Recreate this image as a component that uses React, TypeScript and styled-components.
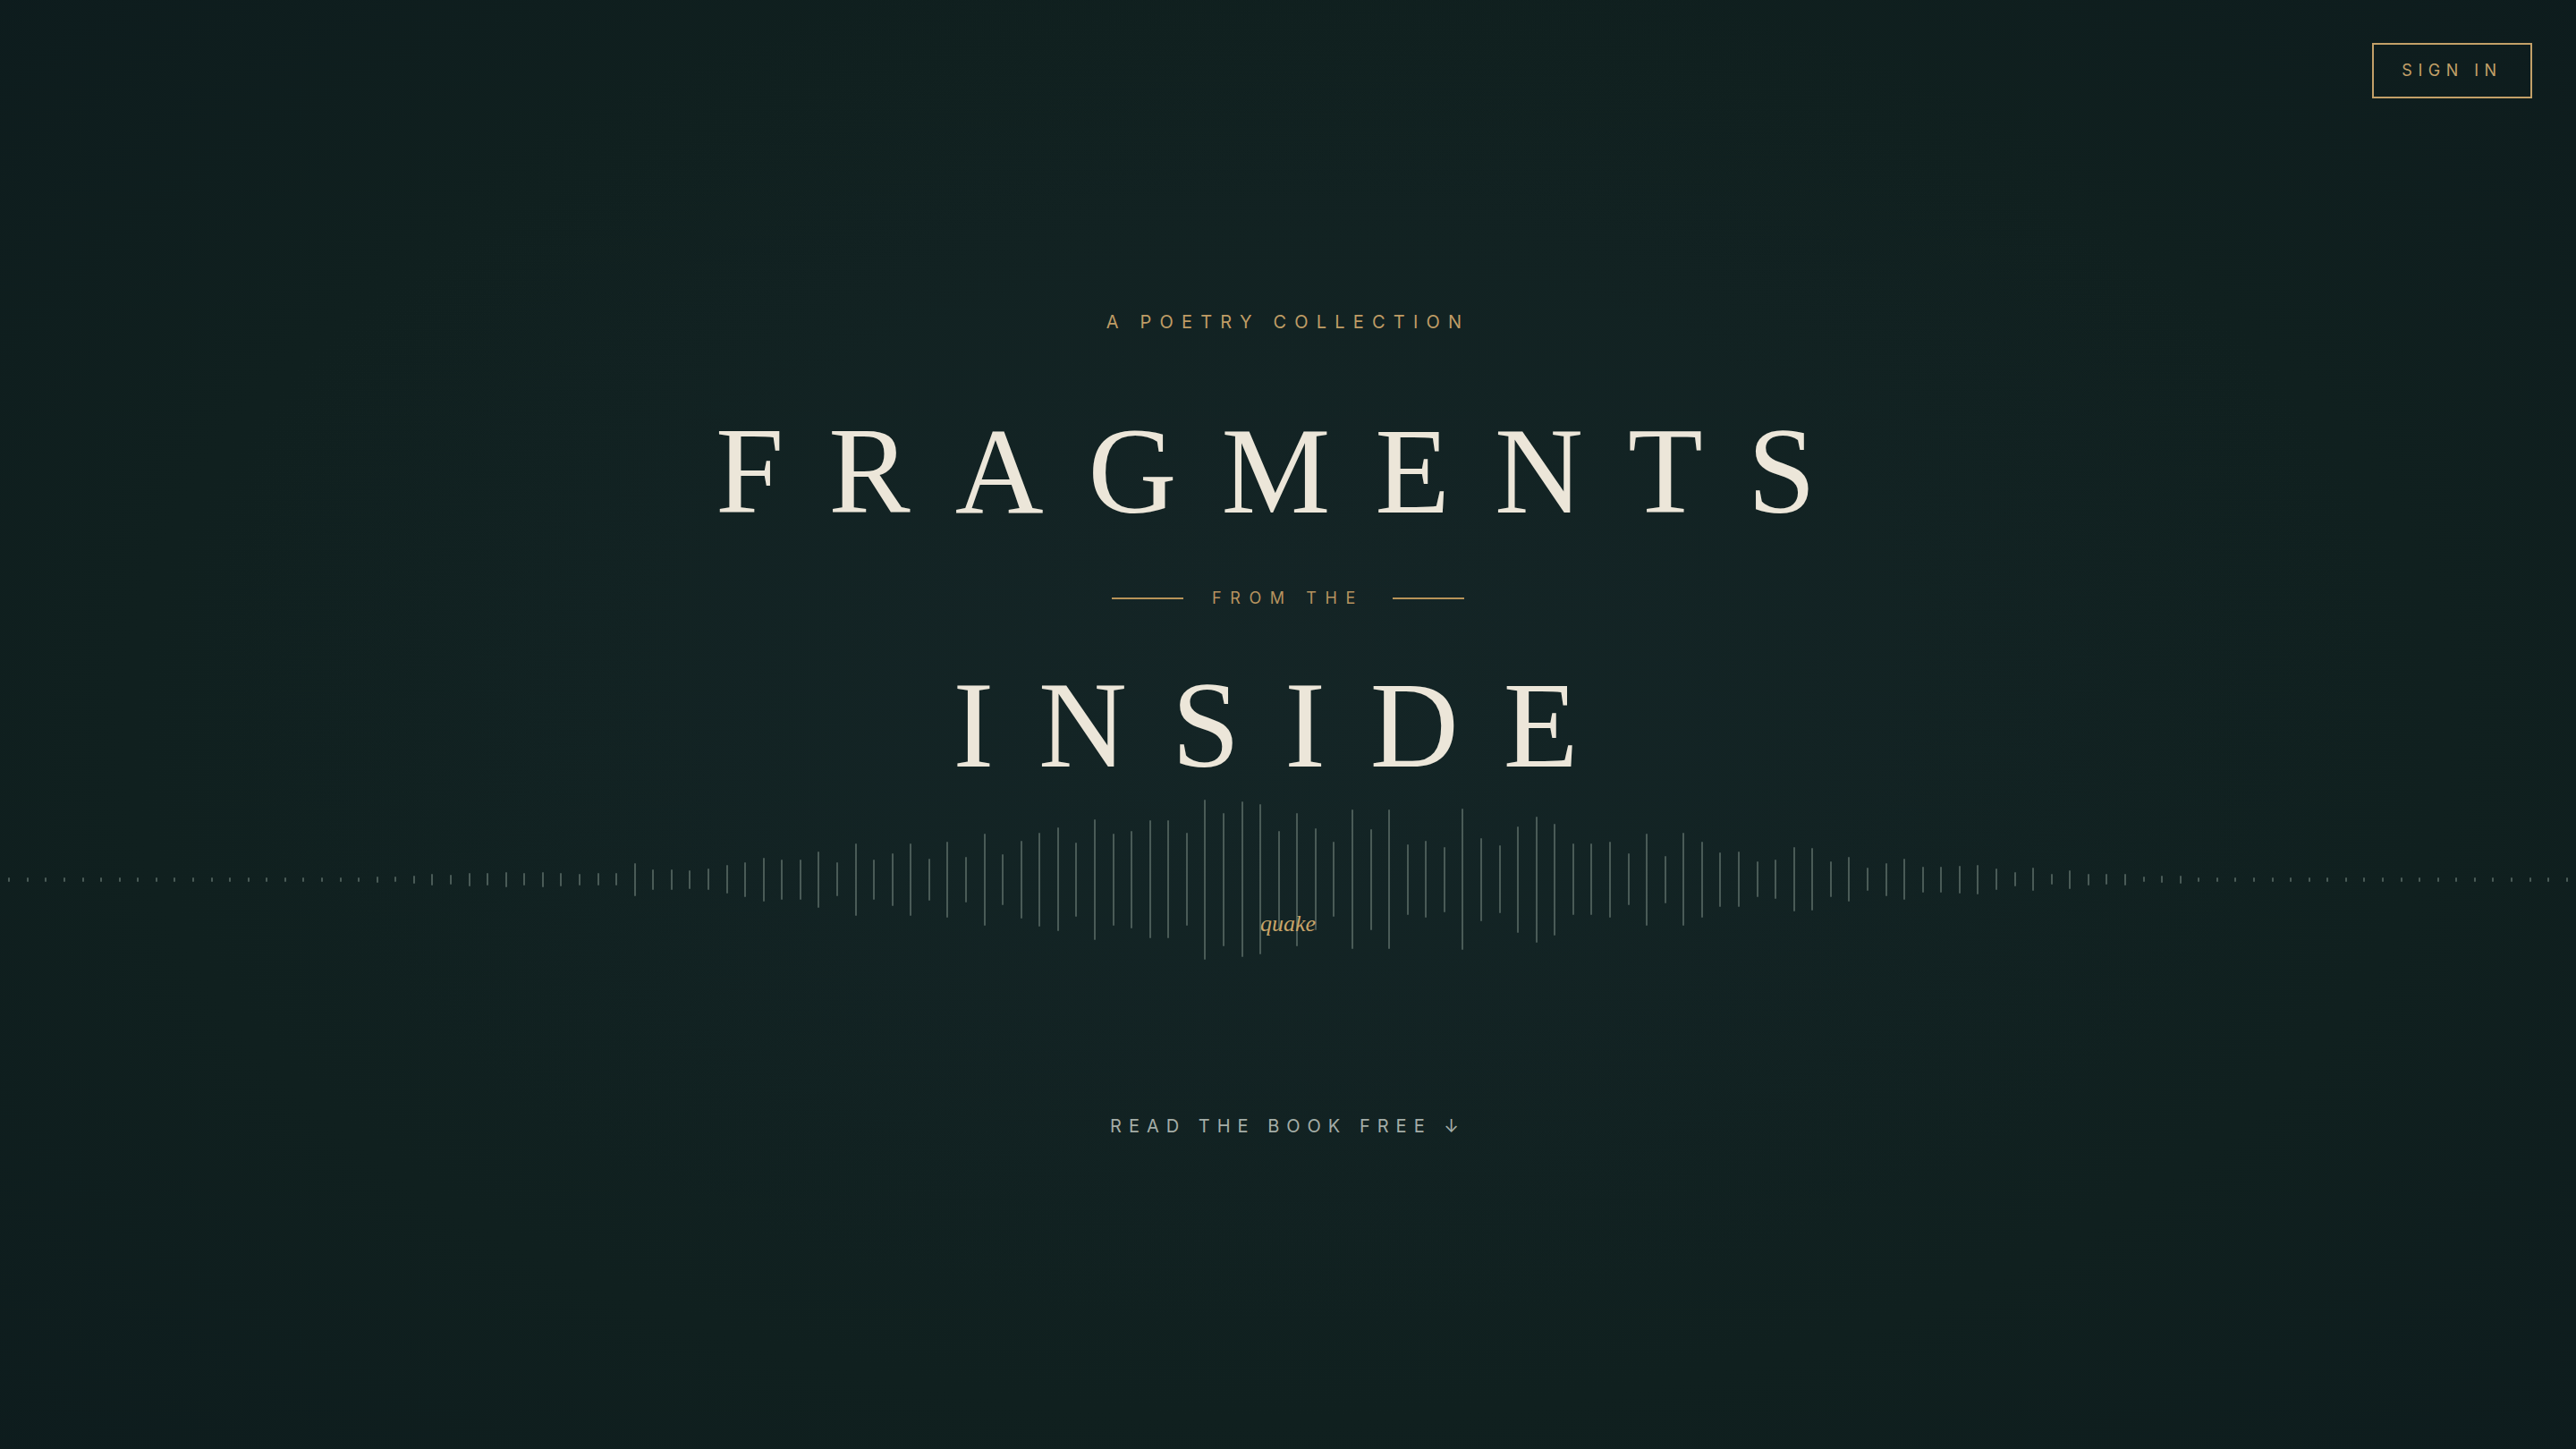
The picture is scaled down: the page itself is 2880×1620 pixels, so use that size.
import React from "react";
import styled, { createGlobalStyle } from "styled-components";

const GlobalStyle = createGlobalStyle`
  html, body {
    margin: 0;
    padding: 0;
    background: #0f1e20;
  }
  #root {
    min-height: 100vh;
  }
  *, *::before, *::after {
    box-sizing: border-box;
  }
`;

const GOLD = "#c3a068";

const Page = styled.main`
  position: relative;
  min-height: 100vh;
  width: 100%;
  overflow: hidden;
  display: flex;
  flex-direction: column;
  font-family: Inter, "Liberation Sans", "DejaVu Sans", sans-serif;
  background:
    radial-gradient(ellipse 42% 48% at 50% 44%, rgba(22, 38, 38, 0.45) 0%, rgba(22, 38, 38, 0) 100%),
    radial-gradient(ellipse 75% 80% at 50% 50%, #132426 0%, #10201f 60%, #0d1b1d 100%);
`;

const Header = styled.header`
  display: flex;
  justify-content: flex-end;
  padding: 48px 49px 0;
`;

const SignInButton = styled.button`
  width: 179px;
  height: 62px;
  display: flex;
  align-items: center;
  justify-content: center;
  padding: 0;
  background: transparent;
  border: 2px solid ${GOLD};
  color: ${GOLD};
  font-family: Inter, "Liberation Sans", sans-serif;
  font-size: 18px;
  line-height: 1;
  font-weight: 400;
  letter-spacing: 6.5px;
  text-transform: uppercase;
  cursor: pointer;
`;

const Hero = styled.section`
  display: flex;
  flex-direction: column;
  align-items: center;
  margin-top: 240px;
`;

const Eyebrow = styled.p`
  margin: 0;
  font-size: 20px;
  line-height: 20px;
  letter-spacing: 9.2px;
  color: #bf9c65;
  text-transform: uppercase;
`;

const Title = styled.h1<{ $top: number }>`
  margin: ${(p) => p.$top}px 0 0;
  font-family: "Liberation Serif", "DejaVu Serif", serif;
  font-weight: 400;
  font-size: 137px;
  line-height: 137px;
  letter-spacing: 50px;
  color: #ece6d9;
  text-transform: uppercase;
`;

const DividerRow = styled.div`
  display: flex;
  align-items: center;
  gap: 32px;
  margin-top: 64px;
  height: 18px;
`;

const Rule = styled.span`
  display: block;
  width: 80px;
  height: 2px;
  background: #b89459;
`;

const DividerText = styled.span`
  font-size: 18px;
  line-height: 18px;
  letter-spacing: 9.6px;
  color: #b6935f;
  text-transform: uppercase;
`;

const Waveform = styled.div`
  position: relative;
  width: 100%;
  height: 180px;
  margin-top: 13px;
  display: grid;
  grid-template-columns: repeat(140, 1fr);
  align-items: center;
`;

const BarCell = styled.div`
  display: flex;
  justify-content: center;
  align-items: center;
`;

const Bar = styled.span`
  display: block;
  width: 2px;
  border-radius: 1px;
  background: #4a5b57;
`;

const WordLabel = styled.span`
  position: absolute;
  left: 50%;
  top: 127px;
  transform: translateX(-50%);
  font-family: "Liberation Serif", "DejaVu Serif", serif;
  font-style: italic;
  font-size: 26px;
  line-height: 26px;
  color: #c9a569;
`;

const ReadLink = styled.a`
  margin-top: 176px;
  font-size: 20px;
  line-height: 20px;
  letter-spacing: 8px;
  color: #a4ada7;
  text-decoration: none;
  text-transform: uppercase;
  cursor: pointer;
`;

const mid: number[] = [
  7, 6, 9, 13, 11, 15, 14, 17, 14, 17, 15, 13, 14, 14, 37, 23, 23, 21, 24, 32,
  39, 49, 45, 45, 63, 38, 81, 45, 59, 81, 47, 85, 51, 103, 57, 87, 105, 116, 83, 135,
  103, 109, 132, 132, 104, 179, 149, 174, 168, 109, 149, 114, 84, 156, 113, 156, 79, 86, 73, 158,
  93, 76, 119, 141, 125, 80, 80, 85, 58, 103, 53, 104, 85, 61, 62, 40, 44, 72, 70, 40,
  50, 26, 37, 46, 29, 29, 31, 33, 24, 16, 26, 12, 21, 13, 12, 13, 6, 8, 9,
];

const heights: number[] = [
  ...Array.from({ length: 20 }, () => 5),
  ...mid,
];
while (heights.length < 140) heights.push(5);

export default function App() {
  return (
    <>
      <GlobalStyle />
      <Page>
        <Header>
          <SignInButton type="button">Sign in</SignInButton>
        </Header>
        <Hero>
          <Eyebrow>A Poetry Collection</Eyebrow>
          <Title $top={89}>Fragments</Title>
          <DividerRow>
            <Rule />
            <DividerText>From the</DividerText>
            <Rule />
          </DividerRow>
          <Title $top={65}>Inside</Title>
          <Waveform>
            {heights.map((h, i) => (
              <BarCell key={i}>
                <Bar style={{ height: `${h}px` }} />
              </BarCell>
            ))}
            <WordLabel>quake</WordLabel>
          </Waveform>
          <ReadLink href="#read">Read the book free ↓</ReadLink>
        </Hero>
      </Page>
    </>
  );
}
